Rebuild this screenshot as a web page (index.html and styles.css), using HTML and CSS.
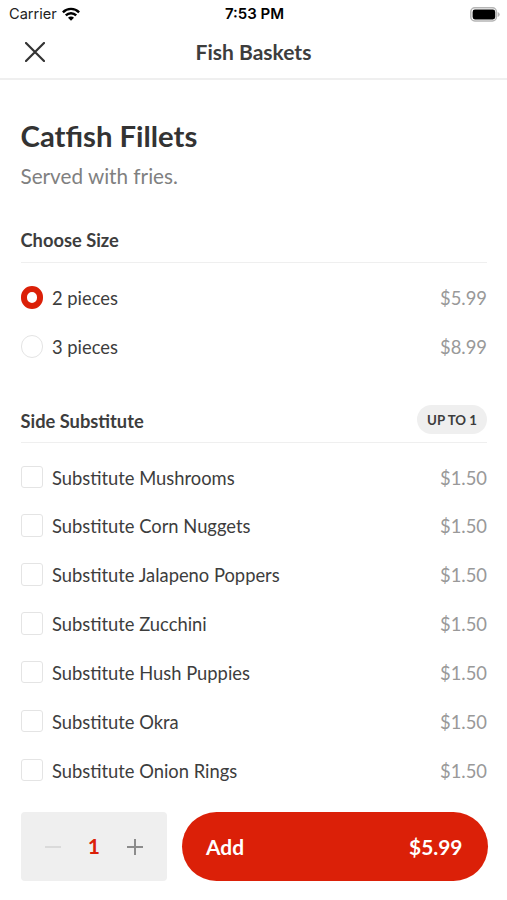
FILE: index.html
```html
<!DOCTYPE html>
<html lang="en">
<head>
<meta charset="utf-8">
<title>Fish Baskets</title>
<link rel="stylesheet" href="styles.css">
</head>
<body>
<div class="app">
  <div class="status">
    <div class="carrier"><span>Carrier</span>
      <svg width="18" height="14" viewBox="0 0 18 14"><path d="M.9 5.3a11.4 11.4 0 0 1 16.2 0M3.8 8.4a7.3 7.3 0 0 1 10.4 0" fill="none" stroke="#000" stroke-width="2.4"/><path d="M9 13.8 6 10.8a4.2 4.2 0 0 1 6 0z"/></svg>
    </div>
    <div class="time">7:53 PM</div>
    <svg class="battery" width="30" height="15" viewBox="0 0 30 15"><rect x=".8" y=".8" width="25.6" height="13.2" rx="4" fill="#fff" stroke="#b5b5b5" stroke-width="1.5"/><rect x="2.6" y="2.6" width="22.6" height="9.8" rx="2.3"/><path d="M27.7 5q2 .7 2 2.5t-2 2.5z" fill="#b5b5b5"/></svg>
  </div>
  <header class="nav">
    <svg class="close" width="20" height="20" viewBox="0 0 20 20"><path d="M1 1 19 19M19 1 1 19" fill="none" stroke="#333" stroke-width="2.2" stroke-linecap="round"/></svg>
    <div class="nav-title">Fish Baskets</div>
  </header>
  <main class="content">
    <h1>Catfish Fillets</h1>
    <p class="desc">Served with fries.</p>
    <section class="group size">
      <div class="group-head"><h2>Choose Size</h2></div>
      <div class="row"><span class="radio on"></span><span class="name">2 pieces</span><span class="price">$5.99</span></div>
      <div class="row"><span class="radio"></span><span class="name">3 pieces</span><span class="price">$8.99</span></div>
    </section>
    <section class="group side">
      <div class="group-head"><h2>Side Substitute</h2><span class="pill">UP TO 1</span></div>
      <div class="row"><span class="box"></span><span class="name">Substitute Mushrooms</span><span class="price">$1.50</span></div>
      <div class="row"><span class="box"></span><span class="name">Substitute Corn Nuggets</span><span class="price">$1.50</span></div>
      <div class="row"><span class="box"></span><span class="name">Substitute Jalapeno Poppers</span><span class="price">$1.50</span></div>
      <div class="row"><span class="box"></span><span class="name">Substitute Zucchini</span><span class="price">$1.50</span></div>
      <div class="row"><span class="box"></span><span class="name">Substitute Hush Puppies</span><span class="price">$1.50</span></div>
      <div class="row"><span class="box"></span><span class="name">Substitute Okra</span><span class="price">$1.50</span></div>
      <div class="row"><span class="box"></span><span class="name">Substitute Onion Rings</span><span class="price">$1.50</span></div>
    </section>
  </main>
  <footer class="bar">
    <div class="stepper">
      <svg width="16" height="16" viewBox="0 0 16 16"><path d="M0 8h16" stroke="#dadada" stroke-width="2"/></svg>
      <span class="qty">1</span>
      <svg width="16" height="16" viewBox="0 0 16 16"><path d="M0 8h16M8 0v16" stroke="#8c8c8c" stroke-width="2"/></svg>
    </div>
    <div class="add"><span>Add</span><span>$5.99</span></div>
  </footer>
</div>
</body>
</html>
```
FILE: styles.css
```css
* { box-sizing: border-box; }
body { margin: 0; background: #fff; color: #3d3d3d; font-family: Lato, sans-serif; }
svg { display: block; flex: none; }
.app { width: 507px; height: 900px; overflow: hidden; display: flex; flex-direction: column; }
.status { height: 26px; flex: none; display: grid; grid-template-columns: 1fr auto 1fr; align-items: center; padding: 1px 7px 0 9px; font: 14.6px/26px Inter, sans-serif; color: #000; }
.carrier { display: flex; align-items: center; gap: 5px; color: #222; }
.time { font-weight: 600; font-size: 15px; }
.battery { justify-self: end; }
.nav { height: 54px; flex: none; display: grid; grid-template-columns: 1fr auto 1fr; align-items: center; padding: 0 25px; border-bottom: 2px solid #efefef; }
.nav-title { font-size: 21px; font-weight: 700; line-height: 26px; }
.content { flex: 1; min-height: 0; overflow: hidden; padding: 38px 20px 0 20.5px; }
h1 { margin: 0; font-size: 29.3px; line-height: 36px; font-weight: 700; color: #333; }
.desc { margin: 9px 0 0; font-size: 20.7px; line-height: 26px; color: #808080; }
.group-head { display: flex; align-items: center; justify-content: space-between; border-bottom: 1px solid #efefef; }
h2 { margin: 0; font-size: 18.3px; line-height: 24px; font-weight: 700; }
.size .group-head { height: 45px; margin-top: 29px; margin-bottom: 11px; }
.side .group-head { height: 45px; margin-top: 26.3px; margin-bottom: 10.2px; }
.side h2 { padding-top: 2px; }
.pill { height: 29px; padding: 0 10px; border-radius: 15px; background: #efefef; font-size: 13.3px; line-height: 30px; font-weight: 700; }
.row { height: 48.85px; display: flex; align-items: center; }
.name { font-size: 18.35px; margin-left: 9px; flex: 1; }
.price { font-size: 18.4px; color: #999; }
.radio, .box { width: 22.5px; height: 22.5px; flex: none; margin-bottom: 1.5px; border: 1.5px solid #e4e4e4; border-radius: 50%; }
.radio.on { border: 6px solid #db2008; }
.box { border-radius: 3px; }
.bar { height: 106px; flex: none; display: flex; gap: 15px; padding: 18px 19.5px 0 20.5px; }
.stepper { width: 146.5px; height: 69px; border-radius: 4px; background: #efefef; display: flex; align-items: center; justify-content: space-between; padding: 0 24px; }
.qty { color: #db2008; font-size: 21px; line-height: 26px; font-weight: 700; padding-bottom: 1px; }
.add { flex: 1; height: 69px; border-radius: 35px; background: #db2008; color: #fff; display: flex; align-items: center; justify-content: space-between; padding: 0 25px 1px 24px; font-size: 20.9px; font-weight: 700; }
```
